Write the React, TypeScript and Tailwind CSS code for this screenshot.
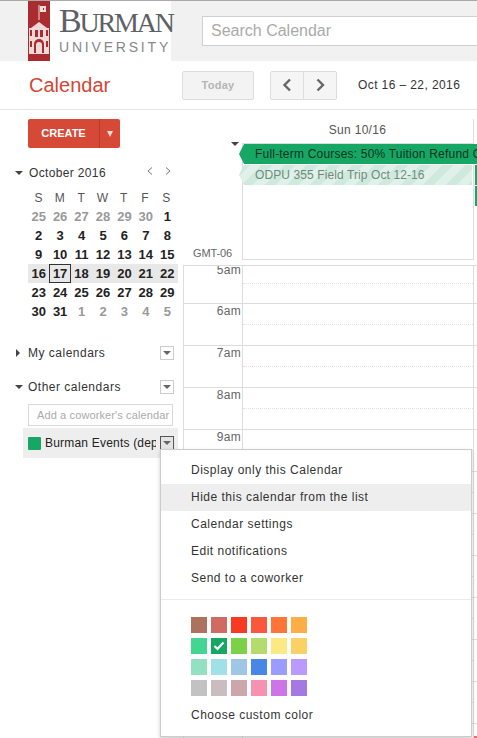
import React from 'react'

const font = { fontFamily: '"Liberation Sans", Arial, sans-serif' }

const weeks = [
  ['25', '26', '27', '28', '29', '30', '1'],
  ['2', '3', '4', '5', '6', '7', '8'],
  ['9', '10', '11', '12', '13', '14', '15'],
  ['16', '17', '18', '19', '20', '21', '22'],
  ['23', '24', '25', '26', '27', '28', '29'],
  ['30', '31', '1', '2', '3', '4', '5'],
]

const palette = [
  ['#ac725e', '#d06b64', '#f83a22', '#fa573c', '#ff7537', '#ffad46'],
  ['#42d692', '#16a765', '#7bd148', '#b3dc6c', '#fbe983', '#fad165'],
  ['#92e1c0', '#9fe1e7', '#9fc6e7', '#4986e7', '#9a9cff', '#b99aff'],
  ['#c2c2c2', '#cabdbf', '#cca6ac', '#f691b2', '#cd74e6', '#a47ae2'],
]

const hours = ['5am', '6am', '7am', '8am', '9am', '', '', '', '', '', '', '']

const Triangle = ({ open }: { open: boolean }) =>
  open ? (
    <div className="w-0 h-0 border-x-[4px] border-x-transparent border-t-[4px] border-t-[#444]" />
  ) : (
    <div className="w-0 h-0 border-y-[4px] border-y-transparent border-l-[4px] border-l-[#444]" />
  )

const MenuBox = ({ dark }: { dark?: boolean }) => (
  <div className={`w-[14px] h-[14px] border flex items-center justify-center shrink-0 ${dark ? 'border-[#555] bg-[#e4e4e4]' : 'border-[#ccc] bg-white'}`}>
    <div className="w-0 h-0 border-x-[4px] border-x-transparent border-t-[4px] border-t-[#666]" />
  </div>
)

const Logo = () => (
  <div className="w-[143px] h-[60px] bg-white flex shrink-0">
    <div className="w-[22px] h-[60px] bg-[#a92c31] shrink-0">
      <svg width="22" height="60" viewBox="0 0 22 60">
        <path d="M11 4v15" stroke="#f3dcdc" strokeWidth="1" />
        <path d="M12 5h6v6h-6z" fill="#f3dcdc" />
        <path d="M15 7h1v2h-1z" fill="#a92c31" />
        <path d="M1 27h2l8-6 8 6h2v26H1z" fill="#f0d9d9" />
        <path d="M7 29h3v7H7zM12 29h3v7h-3zM2 29h2v6H2zM18 29h2v6h-2zM2 40h2v6H2zM18 40h2v6h-2z" fill="#a92c31" />
        <path d="M6 52V43a5 5 0 0 1 10 0v9z" fill="#a92c31" />
        <path d="M8 52v-8a3 3 0 0 1 6 0v8z" fill="#f0d9d9" />
      </svg>
    </div>
    <div className="ml-[9px] w-[112px] flex flex-col">
      <div className="h-[38px] text-[#5d6164] leading-[40px] tracking-[-2.2px] whitespace-nowrap" style={{ fontFamily: '"Liberation Serif", serif' }}>
        <span className="text-[34px]">B</span>
        <span className="text-[28px]">URMAN</span>
      </div>
      <div className="text-[14px] leading-[14px] mt-[1px] text-[#85888b] tracking-[2.8px] whitespace-nowrap">UNIVERSITY</div>
    </div>
  </div>
)

const Menu = () => (
  <div className="absolute left-[160px] top-[449px] w-[312px] h-[288px] bg-white border border-[#ccc] shadow-[0_2px_4px_rgba(0,0,0,0.2)] text-[12px] text-[#333] tracking-[0.5px] pt-[7px] z-10">
    {['Display only this Calendar', 'Hide this calendar from the list', 'Calendar settings', 'Edit notifications', 'Send to a coworker'].map((item, i) => (
      <div key={item} className={`h-[27px] leading-[27px] pl-[30px] ${i === 1 ? 'bg-[#eee]' : ''}`}>{item}</div>
    ))}
    <div className="h-px bg-[#ebebeb] mt-[7px]" />
    <div className="pl-[30px] pt-[17px] flex flex-col gap-[5px]">
      {palette.map((row, r) => (
        <div key={r} className="flex gap-[4px]">
          {row.map((c) => (
            <div key={c} className="w-[16px] h-[16px] flex items-center justify-center" style={{ backgroundColor: c }}>
              {c === '#16a765' && (
                <svg width="12" height="10" viewBox="0 0 12 10">
                  <path d="M1.5 5l3 3 6-6.5" stroke="#fff" strokeWidth="2.2" fill="none" />
                </svg>
              )}
            </div>
          ))}
        </div>
      ))}
    </div>
    <div className="pl-[30px] mt-[11px] leading-[16px]">Choose custom color</div>
  </div>
)

const Sidebar = () => (
  <div className="w-[183px] shrink-0 text-[12px]">
    <div className="ml-[28px] mt-[9px] w-[92px] h-[29px] bg-[#d64937] rounded-[2px] flex text-white font-bold text-[11px]">
      <div className="w-[72px] border-r border-[#b93a2b] flex items-center justify-center">CREATE</div>
      <div className="flex-1 flex items-center justify-center">
        <div className="w-0 h-0 border-x-[3.5px] border-x-transparent border-t-[6px] border-t-[#f6d7d2]" />
      </div>
    </div>
    <div className="mt-[17px] pl-[15px] flex items-center h-[16px] text-[#333] tracking-[0.35px]">
      <Triangle open />
      <span className="ml-[6px] w-[117px]">October 2016</span>
      <svg width="8" height="10" viewBox="0 0 8 10" className="mb-[4px]"><path d="M6 1.5L2 5l4 3.5" stroke="#777" fill="none" /></svg>
      <svg width="8" height="10" viewBox="0 0 8 10" className="ml-[10px] mb-[4px]"><path d="M2 1.5L6 5 2 8.5" stroke="#777" fill="none" /></svg>
    </div>
    <div className="ml-[28px] mt-[8px] w-[150px] grid grid-cols-7 text-center text-[12px] text-[#555] leading-[18px] tracking-[0.3px] pr-[1px]">
      {['S', 'M', 'T', 'W', 'T', 'F', 'S'].map((d, i) => (
        <div key={i}>{d}</div>
      ))}
    </div>
    <div className="ml-[28px] w-[150px] grid grid-cols-7 text-center text-[13px] font-bold leading-[19px]">
      {weeks.map((row, r) =>
        row.map((d, i) => {
          const muted = (r === 0 && i < 6) || (r === 5 && i > 1)
          return (
            <div key={`${r}-${i}`} className={`h-[19px] ${r === 3 ? 'bg-[#e8e8e8]' : ''} ${muted ? 'text-[#999]' : 'text-[#222]'} ${d === '17' ? 'border border-[#333] leading-[17px]' : ''}`}>
              {d}
            </div>
          )
        })
      )}
    </div>
    <div className="mt-[23px] pl-[16px] pr-[9px] h-[18px] flex items-center text-[#333] tracking-[0.5px]">
      <Triangle open={false} />
      <span className="ml-[8px] flex-1">My calendars</span>
      <MenuBox />
    </div>
    <div className="mt-[16px] pl-[15px] pr-[9px] h-[18px] flex items-center text-[#333] tracking-[0.5px]">
      <Triangle open />
      <span className="ml-[5px] flex-1">Other calendars</span>
      <MenuBox />
    </div>
    <div className="ml-[28px] mt-[8px] w-[145px] h-[22px] border border-[#d9d9d9] pl-[8px] leading-[20px] text-[11px] text-[#aaa] tracking-[0.12px] whitespace-nowrap overflow-hidden">
      Add a coworker's calendar
    </div>
    <div className="ml-[23px] mt-[2px] w-[155px] h-[30px] bg-[#eee] flex items-center pl-[5px] text-[#222] tracking-[0.2px]">
      <div className="w-[13px] h-[13px] bg-[#16a765] rounded-[1px] shrink-0" />
      <span className="ml-[4px] mr-[4px] w-[111px] overflow-hidden whitespace-nowrap">Burman Events (dept)</span>
      <MenuBox dark />
    </div>
  </div>
)

const Grid = () => (
  <div className="w-[294px] shrink-0 text-[#666]">
    <div className="flex h-[33px]">
      <div className="w-[59px] shrink-0" />
      <div className="w-[232px] shrink-0 pt-[12px] text-center text-[12px] leading-[16px] tracking-[0.3px] text-[#555] border-r border-[#ddd] mt-[9px]">
        <div className="-mt-[9px]">Sun 10/16</div>
      </div>
    </div>
    <div className="flex h-[117px]">
      <div className="w-[59px] shrink-0 flex flex-col justify-between">
        <div className="ml-[48px] -mt-[1px] w-0 h-0 border-x-[4px] border-x-transparent border-t-[4px] border-t-[#444]" />
        <div className="pl-[10px] text-[11px] leading-[14px] tracking-[-0.1px]">GMT-06</div>
      </div>
      <div className="w-[232px] h-[117px] border border-[#ddd] shrink-0">
        <div className="-ml-[4px] w-[238px] h-[20px] bg-[#16a765] text-[12px] leading-[20px] pl-[16px] text-[#0c3320] tracking-[0.2px] whitespace-nowrap overflow-hidden [clip-path:polygon(0_50%,5px_0,100%_0,100%_100%,5px_100%)]">
          Full-term Courses: 50% Tuition Refund Oct
        </div>
        <div className="-ml-[4px] mt-[1px] w-[233px] h-[20px] bg-[repeating-linear-gradient(135deg,#cfeadd_0,#cfeadd_8px,#dff1e8_8px,#dff1e8_16px)] text-[12px] leading-[20px] pl-[16px] text-[#6f8a7d] tracking-[0.1px] whitespace-nowrap overflow-hidden [clip-path:polygon(0_50%,5px_0,100%_0,100%_100%,5px_100%)]">
          ODPU 355 Field Trip Oct 12-16
        </div>
      </div>
      <div className="ml-[1px] pt-[22px] flex flex-col gap-[1px]">
        <div className="w-[2px] h-[20px] bg-[#16a765]" />
        <div className="w-[2px] h-[20px] bg-[#16a765]" />
      </div>
    </div>
    <div className="mt-[5px] border-t border-l border-[#ddd]">
      {hours.map((h, i) => (
        <div key={i} className={`flex border-b border-[#ddd] ${i === 0 ? 'h-[38px]' : 'h-[42px]'}`}>
          <div className="w-[59px] shrink-0 border-r border-[#ddd] text-right pr-[1px] text-[12px] leading-[12px] overflow-hidden tracking-[0.3px]">
            <div className={i === 0 ? '-mt-[2px]' : 'mt-[1px]'}>{h}</div>
          </div>
          <div className="w-[231px] shrink-0 border-r border-[#ddd]">
            <div className={`border-b border-dotted border-[#e2e2e2] ${i === 0 ? 'h-[18px]' : 'h-[21px]'}`} />
          </div>
          {i === 11 && <div className="w-[4px] h-[2px] bg-[#f66] mt-[12px]" />}
        </div>
      ))}
    </div>
  </div>
)

const App = () => {
  return (
    <div className="relative w-[477px] h-[738px] overflow-hidden bg-white" style={font}>
      <div className="h-[61px] bg-[#f1f1f1] border-t border-[#aaa] flex">
        <div className="ml-[28px]"><Logo /></div>
        <div className="ml-[31px] mt-[15px] w-[300px] h-[30px] shrink-0 bg-white border border-[#d0d0d0] pl-[8px] text-[16px] leading-[28px] text-[#aaa]">Search Calendar</div>
      </div>
      <div className="h-[49px] border-b border-[#e5e5e5] flex items-center">
        <div className="ml-[29px] w-[153px] text-[20px] text-[#d14836]">Calendar</div>
        <div className="w-[72px] h-[29px] border border-[#ddd] bg-[#f3f3f3] rounded-[2px] text-[11px] font-bold text-[#b5b5b5] flex items-center justify-center tracking-[0.3px]">Today</div>
        <div className="ml-[16px] w-[67px] h-[29px] border border-[#ddd] bg-[#f5f5f5] rounded-[2px] flex">
          <div className="w-[33px] border-r border-[#ddd] flex items-center justify-center">
            <svg width="10" height="14" viewBox="0 0 10 14"><path d="M8 1.5L2.5 7 8 12.5" stroke="#666" strokeWidth="2.4" fill="none" /></svg>
          </div>
          <div className="flex-1 flex items-center justify-center">
            <svg width="10" height="14" viewBox="0 0 10 14"><path d="M2.5 1.5L8 7l-5.5 5.5" stroke="#666" strokeWidth="2.4" fill="none" /></svg>
          </div>
        </div>
        <div className="ml-[21px] text-[12px] text-[#333] tracking-[0.4px] whitespace-nowrap">Oct 16 – 22, 2016</div>
      </div>
      <div className="flex">
        <Sidebar />
        <Grid />
      </div>
      <Menu />
    </div>
  )
}

export default App
